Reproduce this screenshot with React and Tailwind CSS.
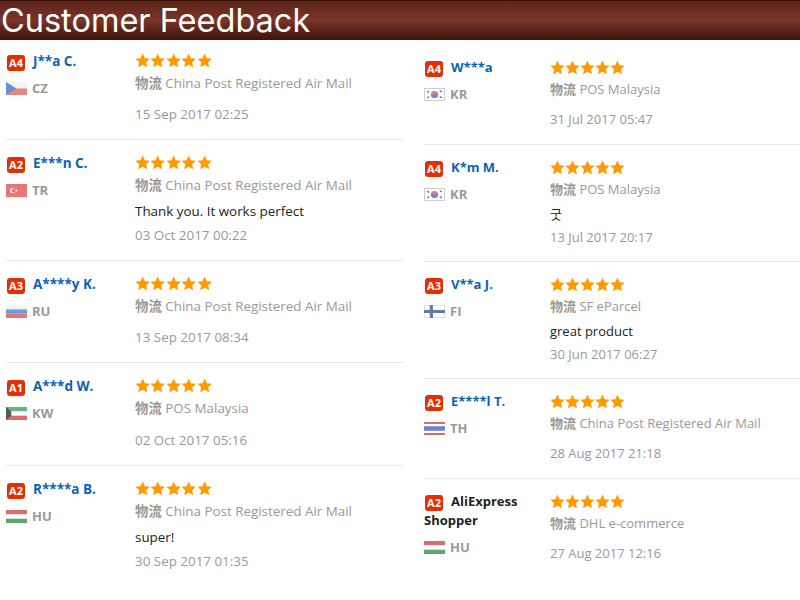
import React from 'react';

const left = [
  { lv: 'A4', name: 'J**a C.', flag: 'CZ', ship: 'China Post Registered Air Mail', date: '15 Sep 2017 02:25' },
  { lv: 'A2', name: 'E***n C.', flag: 'TR', ship: 'China Post Registered Air Mail', text: 'Thank you. It works perfect', date: '03 Oct 2017 00:22' },
  { lv: 'A3', name: 'A****y K.', flag: 'RU', ship: 'China Post Registered Air Mail', date: '13 Sep 2017 08:34' },
  { lv: 'A1', name: 'A***d W.', flag: 'KW', ship: 'POS Malaysia', date: '02 Oct 2017 05:16', loose: true },
  { lv: 'A2', name: 'R****a B.', flag: 'HU', ship: 'China Post Registered Air Mail', text: 'super!', date: '30 Sep 2017 01:35' },
];

const right = [
  { lv: 'A4', name: 'W***a', flag: 'KR', ship: 'POS Malaysia', date: '31 Jul 2017 05:47' },
  { lv: 'A4', name: 'K*m M.', flag: 'KR', ship: 'POS Malaysia', text: '굿', date: '13 Jul 2017 20:17' },
  { lv: 'A3', name: 'V**a J.', flag: 'FI', ship: 'SF eParcel', text: 'great product', date: '30 Jun 2017 06:27' },
  { lv: 'A2', name: 'E****l T.', flag: 'TH', ship: 'China Post Registered Air Mail', date: '28 Aug 2017 21:18' },
  { lv: 'A2', name: 'AliExpress Shopper', flag: 'HU', ship: 'DHL e-commerce', date: '27 Aug 2017 12:16', black: true },
];

const Flag = ({ code }) => (
  <svg width="21" height="13" viewBox="0 0 20 13" preserveAspectRatio="none" className="opacity-70 shrink-0">
    {code === 'CZ' && (
      <>
        <rect width="20" height="6.5" fill="#f2f2f2" />
        <rect y="6.5" width="20" height="6.5" fill="#d9534f" />
        <path d="M0 0L10 6.5L0 13Z" fill="#2f5fc4" />
      </>
    )}
    {code === 'TR' && (
      <>
        <rect width="20" height="13" fill="#e23b3b" />
        <circle cx="6.5" cy="6.5" r="2.6" fill="#fff" />
        <circle cx="7.3" cy="6.5" r="2" fill="#e23b3b" />
        <circle cx="10" cy="6.5" r="0.9" fill="#fff" />
      </>
    )}
    {code === 'RU' && (
      <>
        <rect width="20" height="4.4" fill="#f0f0f0" />
        <rect y="4.4" width="20" height="4.3" fill="#2f6fd0" />
        <rect y="8.7" width="20" height="4.3" fill="#d6403a" />
      </>
    )}
    {code === 'KW' && (
      <>
        <rect width="20" height="4.4" fill="#1f9a48" />
        <rect y="4.4" width="20" height="4.3" fill="#fff" />
        <rect y="8.7" width="20" height="4.3" fill="#c9302c" />
        <path d="M0 0L5 4.4V8.7L0 13Z" fill="#111" />
      </>
    )}
    {code === 'HU' && (
      <>
        <rect width="20" height="4.4" fill="#c9302c" />
        <rect y="4.4" width="20" height="4.3" fill="#fff" />
        <rect y="8.7" width="20" height="4.3" fill="#1b7f35" />
      </>
    )}
    {code === 'KR' && (
      <>
        <rect x="0.5" y="0.5" width="19" height="12" fill="#fff" stroke="#bbb" />
        <circle cx="10" cy="6.5" r="3.4" fill="#c9405f" />
        <path d="M6.6 6.5a3.4 3.4 0 0 0 6.8 0Z" fill="#3a55b0" />
        <path d="M3 3L5 4.5M15 2.5L17 4M3 10L5 8.5M15 8.5L17 10" stroke="#333" strokeWidth="1" />
      </>
    )}
    {code === 'FI' && (
      <>
        <rect x="0.5" y="0.5" width="19" height="12" fill="#fff" stroke="#e4d0dc" />
        <rect y="5" width="20" height="3" fill="#1f3f8f" />
        <rect x="5.5" width="3" height="13" fill="#1f3f8f" />
      </>
    )}
    {code === 'TH' && (
      <>
        <rect width="20" height="13" fill="#c9302c" />
        <rect y="2" width="20" height="9" fill="#fff" />
        <rect y="4.2" width="20" height="4.6" fill="#2f4fc0" />
      </>
    )}
  </svg>
);

const Stars = ({ size }) => (
  <div className="flex h-[16px] items-center">
    {[0, 1, 2, 3, 4].map((i) => (
      <svg key={i} width={size} height="15" viewBox="0 0 24 24" fill="#ff9a00">
        <path d="M12 .8l3.5 7.4 8 1-5.9 5.5 1.6 8L12 18.7l-7.2 4 1.6-8L.5 9.2l8-1z" />
      </svg>
    ))}
  </div>
);

const Row = ({ item, isRight, last }) => (
  <div
    className={`flex pt-[14px] ${last ? '' : 'border-b border-[#e8e8e8]'} ${
      item.text ? (isRight ? 'pb-[14px]' : 'pb-[15px]') : 'pb-[15px]'
    }`}
  >
    <div className={`shrink-0 ${isRight ? 'w-[126px] -mt-px' : 'w-[129px]'}`}>
      <div className={`leading-[19px] font-bold ${isRight ? 'text-[13px]' : 'text-[13.5px]'} ${item.black ? 'text-[#222]' : 'text-[#0b63b6]'}`}>
        <span className="inline-block bg-[#e62e04] text-white text-[11px] leading-[16px] w-[18px] h-[16px] text-center rounded-[3px] ml-px mr-2 align-[-1px]">{item.lv}</span>
        {item.name}
      </div>
      <div className="flex items-center gap-[5px] mt-2 h-[19px]">
        <Flag code={item.flag} />
        <span className="text-[13px] font-bold text-[#999]">{item.flag}</span>
      </div>
    </div>
    <div className={`leading-[20px] ${isRight ? 'text-[13px]' : 'text-[13.4px]'}`}>
      <Stars size={isRight ? 14.9 : 15.4} />
      <div className={`text-[#999] ${isRight ? 'mt-[4px]' : 'mt-[5px]'}`}>
        <span className="font-bold">物流</span> {item.ship}
      </div>
      {item.text ? (
        <>
          <div className={`text-[#222] ${isRight ? 'mt-[5px]' : 'mt-[6px]'}`}>{item.text}</div>
          <div className={`text-[#999] ${isRight ? 'mt-[3px]' : 'mt-[4px]'}`}>{item.date}</div>
        </>
      ) : (
        <div className={`text-[#999] ${isRight ? 'mt-[10px]' : item.loose ? 'mt-[12px]' : 'mt-[11px]'}`}>{item.date}</div>
      )}
    </div>
  </div>
);

export default function App() {
  return (
    <div className="w-[800px] h-[600px] overflow-hidden bg-white font-['Open_Sans','Noto_Sans_CJK_SC','Noto_Sans_CJK_KR',sans-serif]">
      <div className="h-[40px] bg-gradient-to-b from-[#5e2418] via-[#7a3428] to-[#3c1308] border-t border-[#3c1308] flex items-center pl-px">
        <h1 className="text-white text-[32.5px] leading-[40px] font-['Inter',sans-serif] font-normal whitespace-nowrap">Customer Feedback</h1>
      </div>
      <div className="flex">
        <div className="w-[397px] ml-[6px] -mt-[2px]">
          {left.map((item, i) => (
            <Row key={i} item={item} last={i === left.length - 1} />
          ))}
        </div>
        <div className="w-[376px] ml-[21px] mt-[5px]">
          {right.map((item, i) => (
            <Row key={i} item={item} isRight last={i === right.length - 1} />
          ))}
        </div>
      </div>
    </div>
  );
}
